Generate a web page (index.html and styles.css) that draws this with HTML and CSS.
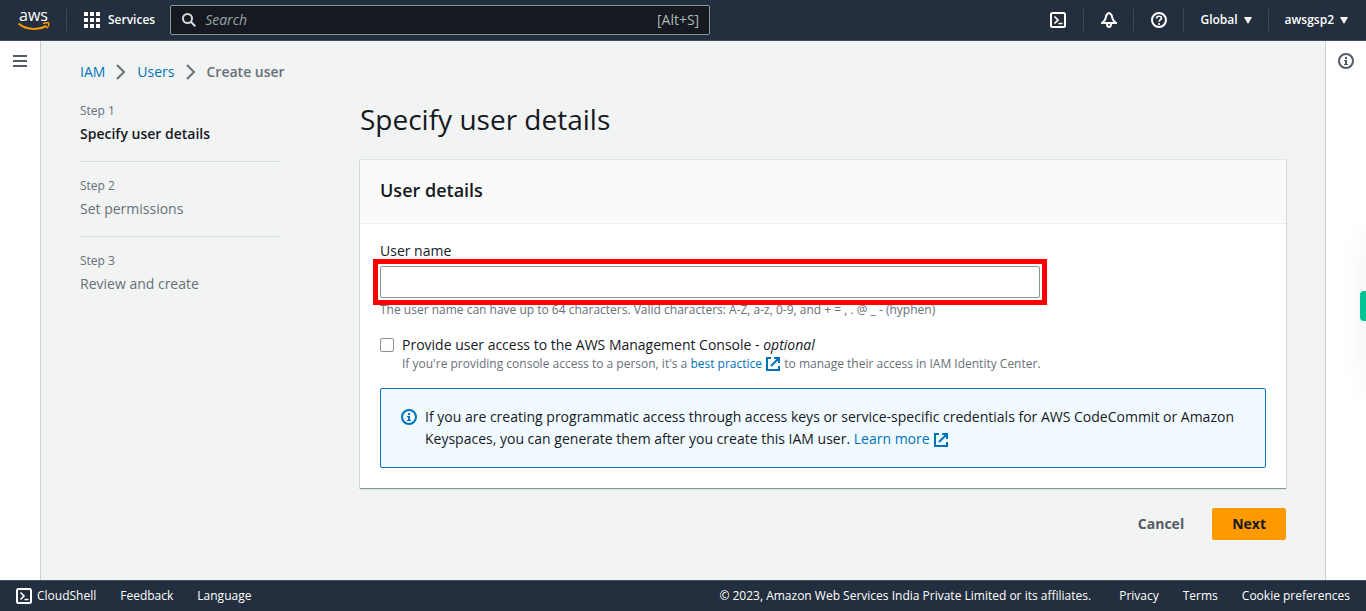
FILE: index.html
```html
<!DOCTYPE html>
<html lang="en">
<head>
<meta charset="utf-8">
<meta name="viewport" content="width=device-width, initial-scale=1">
<title>Create user | IAM</title>
<link rel="stylesheet" href="styles.css">
</head>
<body>
<svg class="defs" width="0" height="0" aria-hidden="true">
  <symbol id="shell" viewBox="0 0 16 16"><rect x="1" y="1" width="14" height="14" rx="1.5" fill="none" stroke="currentColor" stroke-width="2"/><path d="M4.500 4.500 8 8 4.500 11.500M8.500 11.500H12.500" fill="none" stroke="currentColor" stroke-width="1.700"/></symbol>
  <symbol id="info" viewBox="0 0 16 16"><circle cx="8" cy="8" r="7" fill="none" stroke="currentColor" stroke-width="2"/><path d="M7 4h2v2H7zM6 7h3v4h1v1H6v-1h1V8H6z" fill="currentColor"/></symbol>
  <symbol id="external" viewBox="0 0 14 14"><path d="M5 1H1v12h12V9M8 1h5v5M13 1 5 9" fill="none" stroke="currentColor" stroke-width="2"/></symbol>
  <symbol id="chevron" viewBox="0 0 10 16"><path d="m1 1 7 7-7 7" fill="none" stroke="currentColor" stroke-width="2"/></symbol>
</svg>
<div class="app">
  <header class="topbar">
    <a class="logo" href="#" aria-label="AWS home">
      <svg width="34" height="32" viewBox="0 0 34 32"><text x="1" y="17" class="logo-text">aws</text><path d="M.5 19.500C8 26 20 26.500 28.500 22" fill="none" stroke="#f90" stroke-width="2"/><path d="M25 19.500c3-1 6-1 6 0s-.5 3-2.200 4.800" fill="none" stroke="#f90" stroke-width="1.400"/></svg>
    </a>
    <button class="services" type="button">
      <svg width="16" height="16" viewBox="0 0 16 16" fill="currentColor"><path d="M0 0h4v4H0zM6 0h4v4H6zM12 0h4v4h-4zM0 6h4v4H0zM6 6h4v4H6zM12 6h4v4h-4zM0 12h4v4H0zM6 12h4v4H6zM12 12h4v4h-4z"/></svg>
      Services
    </button>
    <label class="search">
      <svg width="14" height="14" viewBox="0 0 14 14"><circle cx="5.500" cy="5.500" r="4.500" fill="none" stroke="currentColor" stroke-width="2"/><path d="m9 9 4.300 4.300" stroke="currentColor" stroke-width="2"/></svg>
      <input type="search" placeholder="Search" aria-label="Search">
      <span>[Alt+S]</span>
    </label>
    <div class="tools">
      <button type="button" aria-label="CloudShell"><svg width="16" height="16"><use href="#shell"/></svg></button>
      <button type="button" aria-label="Notifications"><svg width="16" height="16" viewBox="0 0 16 16" fill="none" stroke="currentColor" stroke-width="2"><path d="M8 1C6 1.500 5 3.500 4.700 6 4.300 8 3 9.500 1 11h14c-2-1.500-3.300-3-3.700-5C11 3.500 10 1.500 8 1z"/><path d="M6 11.500C6 14 6.500 15 8 15s2-1 2-3.500"/></svg></button>
      <button type="button" aria-label="Help"><svg width="16" height="16" viewBox="0 0 16 16" fill="none" stroke="currentColor" stroke-width="2"><circle cx="8" cy="8" r="7"/><path d="M5.500 6.500C5.500 3.500 10.500 3.700 10.500 6.300 10.500 8 8 7.500 8 9.700M8 11v2" stroke-width="1.600"/></svg></button>
      <button type="button" class="menu">Global <i class="caret"></i></button>
      <button type="button" class="menu">awsgsp2 <i class="caret"></i></button>
    </div>
  </header>

  <div class="body">
    <aside class="rail">
      <button type="button" aria-label="Open navigation"><svg width="14" height="12" viewBox="0 0 14 12"><path d="M0 1h14M0 6h14M0 11h14" stroke="currentColor" stroke-width="2"/></svg></button>
    </aside>
    <main class="content">
      <nav class="crumbs" aria-label="Breadcrumb">
        <a href="#">IAM</a><svg width="10" height="16"><use href="#chevron"/></svg><a href="#">Users</a><svg width="10" height="16"><use href="#chevron"/></svg><span>Create user</span>
      </nav>
      <div class="wizard">
        <ol class="steps">
          <li class="active"><small>Step 1</small><span>Specify user details</span></li>
          <li><small>Step 2</small><span>Set permissions</span></li>
          <li><small>Step 3</small><span>Review and create</span></li>
        </ol>
        <form class="form">
          <h1>Specify user details</h1>
          <section class="card">
            <h2>User details</h2>
            <div class="card-body">
              <label class="field-label" for="username">User name</label>
              <div class="highlight"><input id="username" type="text"></div>
              <p class="hint">The user name can have up to 64 characters. Valid characters: A-Z, a-z, 0-9, and + = , . @ _ - (hyphen)</p>
              <div class="check">
                <input id="console" type="checkbox">
                <div>
                  <label for="console">Provide user access to the AWS Management Console - <em>optional</em></label>
                  <p class="hint">If you're providing console access to a person, it's a <a href="#">best practice <svg width="14" height="14"><use href="#external"/></svg></a> to manage their access in IAM Identity Center.</p>
                </div>
              </div>
              <div class="alert">
                <svg width="16" height="16"><use href="#info"/></svg>
                <p>If you are creating programmatic access through access keys or service-specific credentials for AWS CodeCommit or Amazon Keyspaces, you can generate them after you create this IAM user. <a href="#">Learn more <svg width="14" height="14"><use href="#external"/></svg></a></p>
              </div>
            </div>
          </section>
          <div class="actions">
            <button type="button" class="cancel">Cancel</button>
            <button type="button" class="next">Next</button>
          </div>
        </form>
      </div>
    </main>
    <aside class="rail rail-right">
      <button type="button" aria-label="Open info panel"><svg width="16" height="16"><use href="#info"/></svg></button>
      <div class="tab"></div>
    </aside>
  </div>

  <footer class="footer">
    <button type="button"><svg width="16" height="16"><use href="#shell"/></svg>CloudShell</button>
    <a href="#">Feedback</a>
    <a href="#">Language</a>
    <div class="legal">
      <span>© 2023, Amazon Web Services India Private Limited or its affiliates.</span>
      <a href="#">Privacy</a>
      <a href="#">Terms</a>
      <a href="#">Cookie preferences</a>
    </div>
  </footer>
</div>
</body>
</html>
```
FILE: styles.css
```css
* { box-sizing: border-box; }
body, h1, h2, p, ol { margin: 0; padding: 0; }
body { font: 14px/22px "Open Sans", "Noto Sans", sans-serif; color: #16191f; }
button, input { font: inherit; color: inherit; }
button { border: 0; padding: 0; background: none; cursor: pointer; }
a { color: #0073bb; text-decoration: none; }
svg { flex: none; }
.defs { position: absolute; }
.app { min-height: 100vh; display: flex; flex-direction: column; }

.topbar { display: flex; align-items: center; height: 41px; background: #232f3e; border-bottom: 1px solid #414d5c; color: #fff; font-size: 12px; font-weight: 600; }
.logo { display: flex; width: 67px; height: 22px; align-items: center; padding-left: 18px; border-right: 1px solid #414750; }
.logo svg { overflow: visible; }
.logo-text { font: 500 16px "Open Sans", sans-serif; fill: #fff; }
.services { display: flex; align-items: center; gap: 8px; padding: 0 15px 0 17px; }
.search { display: flex; align-items: center; gap: 9px; width: 540px; height: 30px; padding: 0 10px 0 11px; border: 1px solid #879596; border-radius: 2px; background: #16191f; color: #d5dbdb; font-size: 14px; font-weight: 400; }
.search input { flex: 1; min-width: 0; padding: 0; border: 0; background: none; outline: 0; }
.search input::placeholder { color: #95a5a6; font-style: italic; opacity: 1; }
.search span { color: #aab7b8; }
.tools { display: flex; align-items: center; margin-left: auto; padding-right: 2px; }
.tools button { display: flex; align-items: center; justify-content: center; width: 50px; height: 22px; border-left: 1px solid #414750; }
.tools button:first-child { border-left: 0; }
.tools .menu { width: auto; gap: 6px; padding: 0 16px; }
.caret { border: 4px solid transparent; border-top: 7px solid #fff; border-bottom: 0; }

.body { flex: 1; display: flex; }
.rail { position: relative; flex: none; width: 40px; box-shadow: 1px 0 #ccd0d2; background: #fff; color: #545b64; text-align: center; }
.rail button { display: flex; justify-content: center; align-items: center; width: 100%; height: 40px; }
.rail-right { box-shadow: -1px 0 #ccd0d2; overflow: hidden; }
.tab { position: absolute; right: 0; top: 250px; width: 6px; height: 30px; border-radius: 4px 0 0 4px; background: #00c896; }
.rail-right::after { content: ""; position: absolute; left: 100%; top: 190px; width: 10px; height: 160px; box-shadow: 0 0 24px rgba(0, 0, 0, .08); }
.content { flex: 1; min-width: 0; padding: 20px 40px 40px; background: #f2f3f3; }

.crumbs { display: flex; align-items: center; gap: 11px; color: #687078; }
.crumbs span { font-weight: 600; }
.wizard { display: flex; gap: 80px; }
.steps { flex: none; width: 200px; margin-top: 18px; list-style: none; color: #687078; }
.steps li { display: flex; flex-direction: column; height: 75px; }
.steps li:not(:last-child) { height: 61px; margin-bottom: 14px; border-bottom: 1px solid #d5dbdb; }
.steps small { font-size: 12px; line-height: 20px; }
.steps span { margin-top: 2px; }
.steps .active span { font-weight: 600; color: #16191f; }
.form { flex: 1; min-width: 0; }
h1 { margin-top: 18px; font-size: 28px; font-weight: 400; line-height: 36px; }
.card { margin-top: 23px; background: #fff; box-shadow: 0 1px 1px #879596, 0 0 0 1px #e0e4e4; }
h2 { padding: 19px 20px 22px; background: #fafafa; border-bottom: 1px solid #eaeded; font-size: 18px; font-weight: 600; line-height: 22px; }
.card-body { padding: 16px 20px 20px; }
.field-label { display: block; }
.highlight { width: 660px; max-width: 100%; margin-top: 4px; outline: 5px solid #f00; outline-offset: 2px; }
.highlight input { display: block; width: 100%; height: 32px; padding: 0 10px; border: 1px solid #879596; border-radius: 2px; }
.hint { color: #687078; font-size: 12px; line-height: 16px; }
.highlight + .hint { margin-top: 4px; }
.hint svg, .alert p svg { margin: 0 1px; vertical-align: -3px; }
.check { display: flex; gap: 8px; margin-top: 16px; }
.check input { appearance: none; flex: none; width: 14px; height: 14px; margin: 4px 0 0; border: 1px solid #879596; border-radius: 2px; background: #fff; }
.check label { display: block; }
.alert { display: flex; gap: 8px; margin-top: 16px; padding: 17px 20px; border: 1px solid #0073bb; border-radius: 2px; background: #f1faff; color: #0073bb; }
.alert > svg { margin-top: 3px; }
.alert p { color: #16191f; }
.actions { display: flex; justify-content: flex-end; gap: 8px; margin-top: 20px; font-weight: 700; }
.actions button { height: 32px; padding: 0 20px; border-radius: 2px; }
.cancel { color: #545b64; }
.next { background: #f90; }

.footer { display: flex; align-items: center; gap: 24px; height: 31px; padding: 0 16px; border-top: 1px solid #414d5c; background: #232f3e; color: #fff; font-size: 12px; font-weight: 500; }
.footer a { color: #fff; }
.footer button { display: flex; align-items: center; gap: 5px; }
.legal { display: flex; gap: 24px; margin-left: auto; }
.legal span { margin-right: 4px; }
```
